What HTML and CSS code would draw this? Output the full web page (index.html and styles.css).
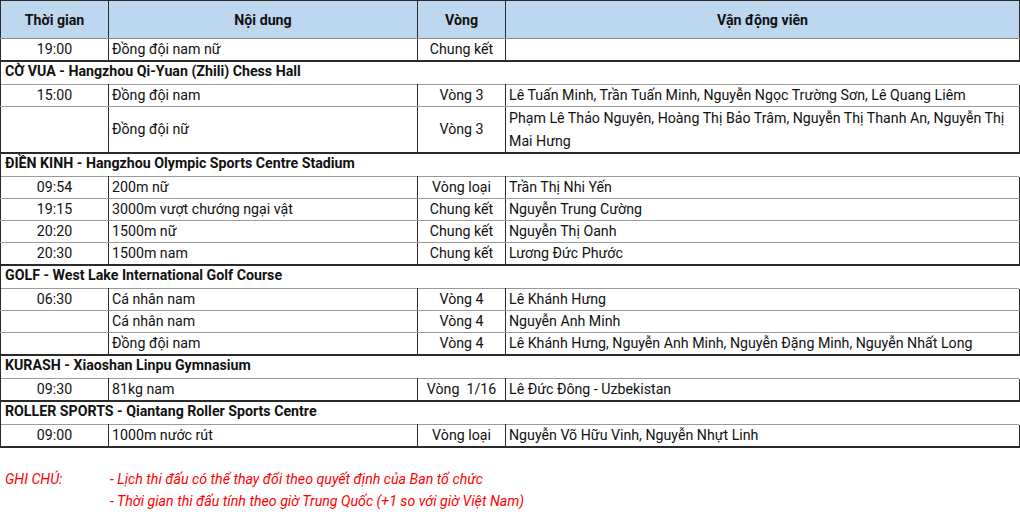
FILE: index.html
```html
<!DOCTYPE html>
<html lang="vi">
<head>
<meta charset="utf-8">
<title>Lịch thi đấu</title>
<link rel="stylesheet" href="styles.css">
</head>
<body>
<table class="sched">
  <colgroup>
    <col class="c-time"><col class="c-event"><col class="c-round"><col class="c-ath">
  </colgroup>
  <thead>
    <tr class="head">
      <th>Thời gian</th><th>Nội dung</th><th>Vòng</th><th>Vận động viên</th>
    </tr>
  </thead>
  <tbody>
    <tr class="row last"><td class="time">19:00</td><td class="ev">Đồng đội nam nữ</td><td class="rnd">Chung kết</td><td class="ath"></td></tr>

    <tr class="sport"><td colspan="4">CỜ VUA - Hangzhou Qi-Yuan (Zhili) Chess Hall</td></tr>
    <tr class="row"><td class="time">15:00</td><td class="ev">Đồng đội nam</td><td class="rnd">Vòng 3</td><td class="ath">Lê Tuấn Minh, Trần Tuấn Minh, Nguyễn Ngọc Trường Sơn, Lê Quang Liêm</td></tr>
    <tr class="row last tall"><td class="time"></td><td class="ev">Đồng đội nữ</td><td class="rnd">Vòng 3</td><td class="ath">Phạm Lê Thảo Nguyên, Hoàng Thị Bảo Trâm, Nguyễn Thị Thanh An, Nguyễn Thị<br>Mai Hưng</td></tr>

    <tr class="sport"><td colspan="4">ĐIỀN KINH - Hangzhou Olympic Sports Centre Stadium</td></tr>
    <tr class="row"><td class="time">09:54</td><td class="ev">200m nữ</td><td class="rnd">Vòng loại</td><td class="ath">Trần Thị Nhi Yến</td></tr>
    <tr class="row"><td class="time">19:15</td><td class="ev">3000m vượt chướng ngại vật</td><td class="rnd">Chung kết</td><td class="ath">Nguyễn Trung Cường</td></tr>
    <tr class="row"><td class="time">20:20</td><td class="ev">1500m nữ</td><td class="rnd">Chung kết</td><td class="ath">Nguyễn Thị Oanh</td></tr>
    <tr class="row last"><td class="time">20:30</td><td class="ev">1500m nam</td><td class="rnd">Chung kết</td><td class="ath">Lương Đức Phước</td></tr>

    <tr class="sport"><td colspan="4">GOLF - West Lake International Golf Course</td></tr>
    <tr class="row"><td class="time">06:30</td><td class="ev">Cá nhân nam</td><td class="rnd">Vòng 4</td><td class="ath">Lê Khánh Hưng</td></tr>
    <tr class="row"><td class="time"></td><td class="ev">Cá nhân nam</td><td class="rnd">Vòng 4</td><td class="ath">Nguyễn Anh Minh</td></tr>
    <tr class="row last"><td class="time"></td><td class="ev">Đồng đội nam</td><td class="rnd">Vòng 4</td><td class="ath">Lê Khánh Hưng, Nguyễn Anh Minh, Nguyễn Đặng Minh, Nguyễn Nhất Long</td></tr>

    <tr class="sport"><td colspan="4">KURASH - Xiaoshan Linpu Gymnasium</td></tr>
    <tr class="row last"><td class="time">09:30</td><td class="ev">81kg nam</td><td class="rnd">Vòng&nbsp; 1/16</td><td class="ath">Lê Đức Đông - Uzbekistan</td></tr>

    <tr class="sport"><td colspan="4">ROLLER SPORTS - Qiantang Roller Sports Centre</td></tr>
    <tr class="row last"><td class="time">09:00</td><td class="ev">1000m nước rút</td><td class="rnd">Vòng loại</td><td class="ath">Nguyễn Võ Hữu Vinh, Nguyễn Nhựt Linh</td></tr>
  </tbody>
</table>

<div class="notes">
  <div class="note-label">GHI CHÚ:</div>
  <div class="note-items">
    <div>- Lịch thi đấu có thể thay đổi theo quyết định của Ban tổ chức</div>
    <div>- Thời gian thi đấu tính theo giờ Trung Quốc (+1 so với giờ Việt Nam)</div>
  </div>
</div>
</body>
</html>
```

FILE: styles.css
```css
html, body {
  margin: 0;
  padding: 0;
  background: #ffffff;
}

body {
  font-family: Roboto, "Liberation Sans", sans-serif;
  font-size: 14.2px;
  color: #111111;
}

.sched {
  border-collapse: collapse;
  table-layout: fixed;
  width: 1019px;
}

.c-time { width: 108px; }
.c-event { width: 309px; }
.c-round { width: 88px; }
.c-ath { width: 514px; }

.head th {
  background: #bdd7ee;
  height: 37px;
  padding: 0;
  font-weight: bold;
  text-align: center;
  border: 1px solid #2a2a2a;
  border-bottom: 1px solid #8a8a8a;
}

.row td {
  height: 21px;
  padding: 0 3px;
  line-height: 21px;
  white-space: nowrap;
  border-left: 1px solid #2a2a2a;
  border-right: 1px solid #2a2a2a;
  border-top: 1px solid #9a9a9a;
  border-bottom: 1px solid #9a9a9a;
}

.row.last td {
  border-bottom: 2px solid #2a2a2a;
}

.row.tall td {
  height: 40px;
  line-height: 22.5px;
}

.row .time,
.row .rnd {
  text-align: center;
}

.sport td {
  height: 22px;
  padding: 0 4px;
  line-height: 19px;
  vertical-align: top;
  font-weight: bold;
  border-left: 1px solid #2a2a2a;
  border-right: 1px solid transparent;
}

.notes {
  display: flex;
  margin-top: 20px;
  color: #ff0000;
  font-style: italic;
  line-height: 22px;
}

.note-label {
  width: 110px;
  padding-left: 5px;
  box-sizing: border-box;
}
```
